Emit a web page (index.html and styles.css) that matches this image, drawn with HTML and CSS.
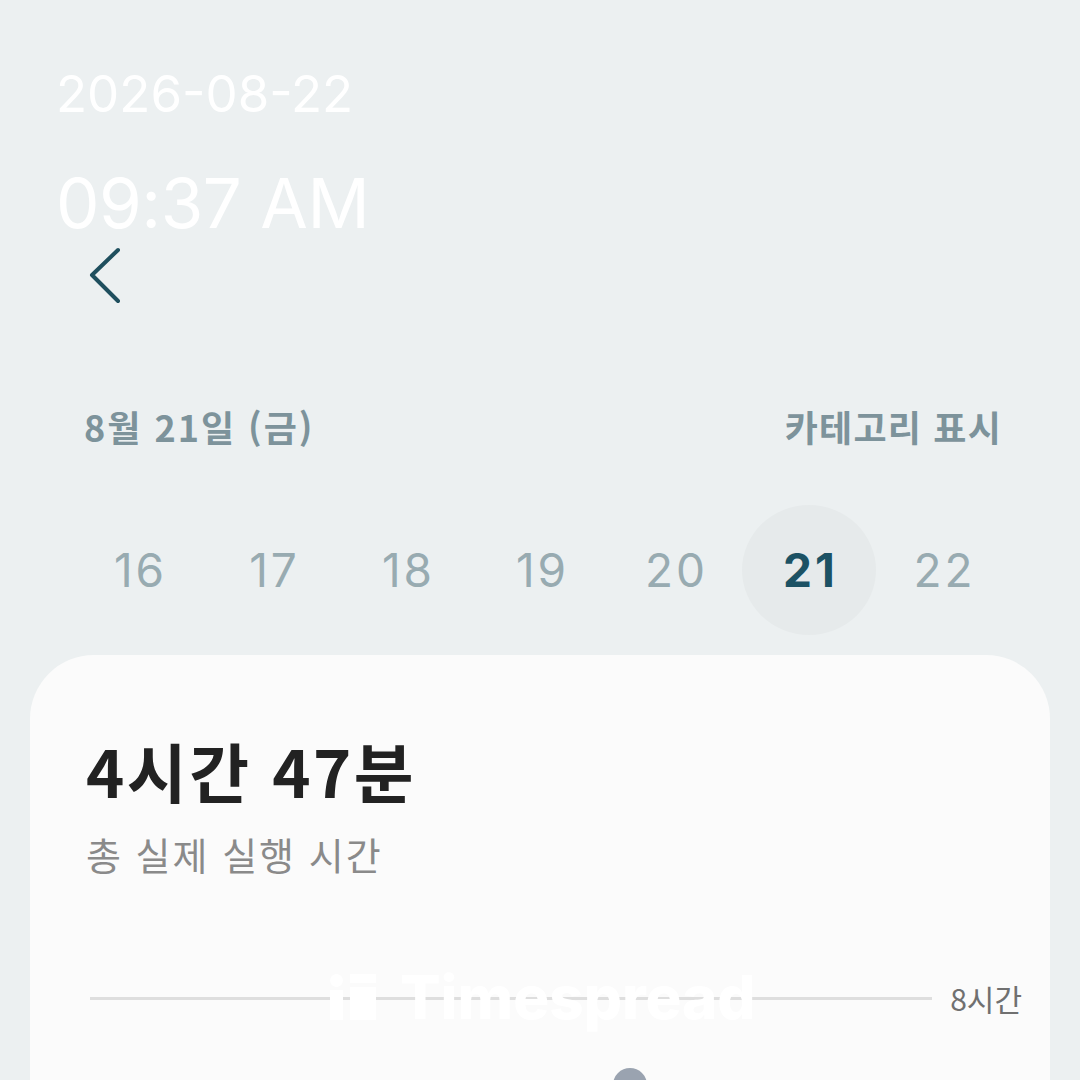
FILE: index.html
```html
<!DOCTYPE html>
<html lang="ko">
<head>
<meta charset="utf-8">
<link rel="stylesheet" href="styles.css">
</head>
<body>
<div class="screen">
  <div class="clock">
    <div class="clock-date">2026-08-22</div>
    <div class="clock-time">09:37 AM</div>
  </div>
  <div class="back">
    <svg width="40" height="60" viewBox="0 0 40 60"><path d="M30 4 L4 29 L30 55" fill="none" stroke="#1f4f5e" stroke-width="4" stroke-linecap="round" stroke-linejoin="round"/></svg>
  </div>
  <div class="date-row">
    <div class="date-label">8월 21일 (금)</div>
    <div class="cat-label">카테고리 표시</div>
  </div>
  <div class="days">
    <div class="day">16</div>
    <div class="day">17</div>
    <div class="day">18</div>
    <div class="day">19</div>
    <div class="day">20</div>
    <div class="day selected">21</div>
    <div class="day">22</div>
  </div>
  <div class="card">
    <div class="total">4시간 47분</div>
    <div class="total-sub">총 실제 실행 시간</div>
    <div class="chart">
      <div class="axis">
        <div class="axis-line"></div>
        <div class="axis-label">8시간</div>
      </div>
      <div class="watermark">
        <svg width="46" height="46" viewBox="0 0 46 46"><circle cx="6.5" cy="6.5" r="6.5" fill="#fff"/><rect x="0" y="16" width="13" height="30" fill="#fff"/><rect x="20" y="0" width="26" height="9" fill="#fff"/><rect x="20" y="13" width="26" height="33" fill="#fff"/></svg>
        <span>Timespread</span>
      </div>
      <div class="knob"></div>
    </div>
  </div>
</div>
</body>
</html>
```

FILE: styles.css
```css
* { box-sizing: border-box; }
html, body { margin: 0; padding: 0; }
body {
  background: #ecf0f1;
  font-family: Inter, "Noto Sans CJK KR", sans-serif;
  width: 1080px;
  height: 1080px;
  overflow: hidden;
}
.screen {
  display: flex;
  flex-direction: column;
  height: 1080px;
  overflow: hidden;
}
.clock {
  padding: 68px 0 0 56px;
  color: #ffffff;
  font-family: Inter, sans-serif;
  line-height: 1;
}
.clock-date {
  font-size: 51px;
}
.clock-time {
  font-size: 69px;
  margin-top: 50px;
  letter-spacing: -0.5px;
}
.back {
  padding: 8px 0 0 88px;
  height: 84px;
}
.back svg { display: block; }
.date-row {
  display: flex;
  justify-content: space-between;
  align-items: center;
  padding: 102px 78px 0 84px;
  font-family: "Noto Sans CJK KR", sans-serif;
  font-weight: 700;
  font-size: 36px;
  letter-spacing: 2px;
  color: #7d939b;
  line-height: 1;
}
.cat-label {
  letter-spacing: 1.2px;
}
.days {
  display: flex;
  padding: 61px 0 0 72px;
}
.day {
  width: 134px;
  height: 130px;
  border-radius: 50%;
  display: flex;
  align-items: center;
  justify-content: center;
  font-family: Inter, sans-serif;
  font-size: 46px;
  letter-spacing: 3px;
  text-indent: 3px;
  color: #98abb1;
  flex-shrink: 0;
}
.day.selected {
  background: #e6eaeb;
  color: #1c5264;
  font-weight: 700;
}
.card {
  margin: 20px 30px 0 30px;
  background: #fbfbfb;
  border-radius: 64px;
  height: 520px;
  flex: none;
  padding: 83px 28px 0 56px;
}
.total {
  font-family: "Noto Sans CJK KR", sans-serif;
  font-weight: 700;
  font-size: 65px;
  letter-spacing: 2.5px;
  color: #222222;
  line-height: 1;
}
.total-sub {
  font-family: "Noto Sans CJK KR", sans-serif;
  font-size: 38px;
  letter-spacing: 2px;
  color: #8a8a8a;
  margin-top: 32px;
  line-height: 1;
}
.chart {
  position: relative;
  margin-top: 103px;
}
.axis {
  display: flex;
  align-items: center;
  padding-left: 4px;
}
.axis-line {
  flex: 1;
  height: 3px;
  background: #dedede;
}
.axis-label {
  margin-left: 18px;
  white-space: nowrap;
  font-family: "Noto Sans CJK KR", sans-serif;
  font-size: 30px;
  color: #707070;
}
.watermark {
  position: absolute;
  left: 244px;
  top: -9px;
  display: flex;
  align-items: center;
  gap: 24px;
  color: #ffffff;
  font-family: Inter, sans-serif;
  font-weight: 800;
  font-size: 60px;
  line-height: 1;
}
.watermark svg { display: block; }
.knob {
  position: absolute;
  left: 527px;
  top: 92px;
  width: 34px;
  height: 34px;
  border-radius: 50%;
  background: #9aa3b0;
}
```
